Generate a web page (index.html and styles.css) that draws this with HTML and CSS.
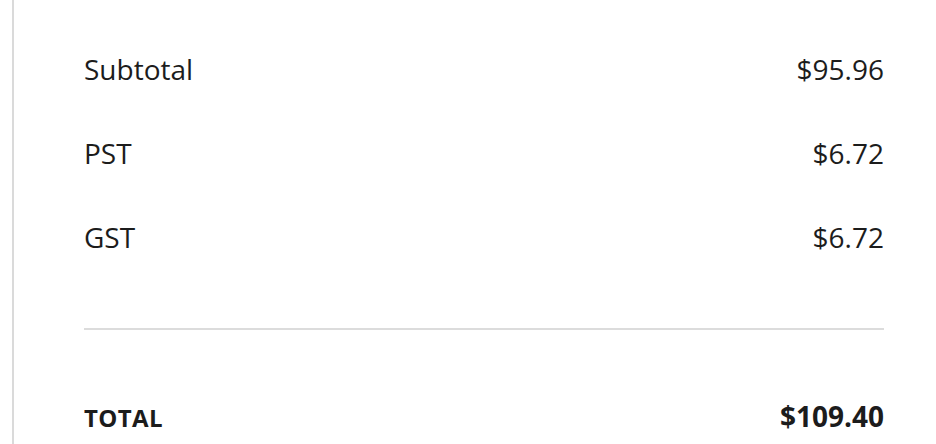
FILE: index.html
```html
<!DOCTYPE html>
<html>
<head>
<meta charset="utf-8">
<link rel="stylesheet" href="styles.css">
</head>
<body>
<div class="panel">
  <div class="rows">
    <div class="row"><span>Subtotal</span><span>$95.96</span></div>
    <div class="row"><span>PST</span><span>$6.72</span></div>
    <div class="row"><span>GST</span><span>$6.72</span></div>
  </div>
  <hr class="divider">
  <div class="row total"><span class="total-label">TOTAL</span><span>$109.40</span></div>
</div>
</body>
</html>
```

FILE: styles.css
```css
html, body {
  margin: 0;
  background: #fff;
}
body {
  font-family: "Open Sans", "Liberation Sans", sans-serif;
  color: #1c1c1c;
  overflow: hidden;
  height: 444px;
}
.panel {
  margin-left: 12px;
  border-left: 2px solid #dadada;
  padding: 45px 52px 0 70px;
  height: 444px;
  box-sizing: border-box;
}
.row {
  display: flex;
  justify-content: space-between;
  align-items: baseline;
  font-size: 28px;
  line-height: 48px;
  height: 48px;
  margin-bottom: 36px;
}
.divider {
  border: 0;
  height: 2px;
  background: #dcdcdc;
  margin: 67px 0 0 0;
}
.total {
  margin: 62px 0 0 0;
  font-weight: 700;
}
.total-label {
  font-size: 24px;
  letter-spacing: 0.4px;
}
```
